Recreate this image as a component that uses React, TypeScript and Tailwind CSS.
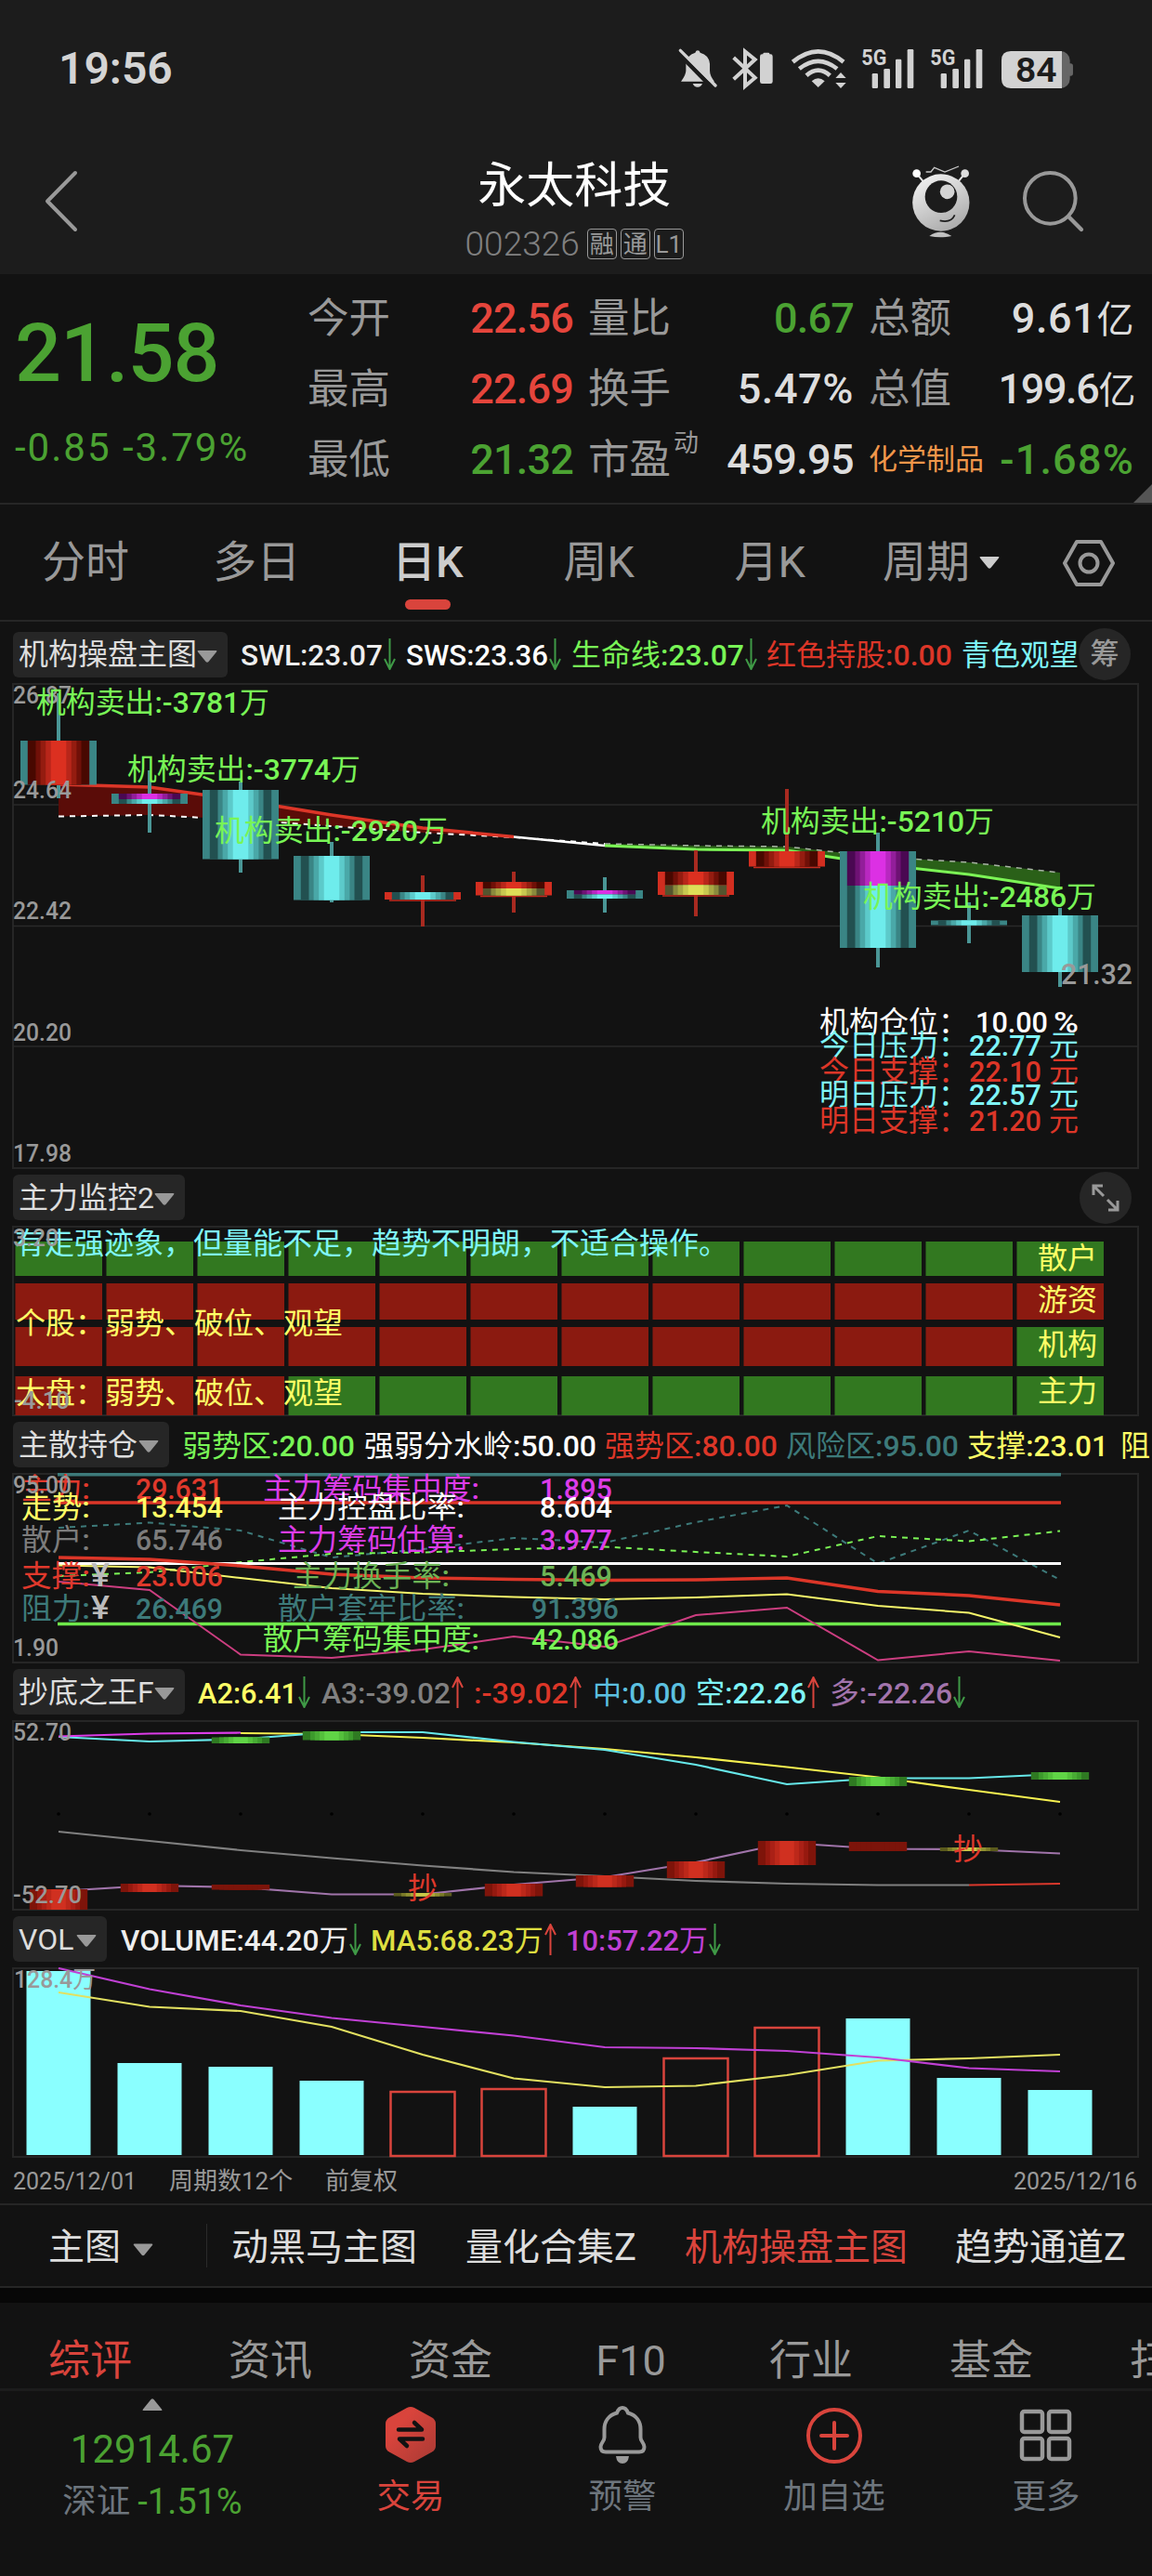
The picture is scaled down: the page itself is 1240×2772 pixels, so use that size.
import clsx from "clsx";

type Pt = number[];

const GRAY = "#999999";
const FONT = "font-['Roboto','Noto_Sans_CJK_SC',sans-serif]";

// x centre of every trading day column
const cx = (i: number) => 63 + 98 * i;
const line = (ys: Pt, from = 0) => ys.map((y, i) => `${cx(i + from)},${y}`).join(" ");

const CYAN = ["#225050", "#3a8585", "#4aa8a8", "#5ccaca", "#6eecec"];
const RED = ["#480800", "#701008", "#941c10", "#b8261a", "#dc3020"];
const MAGENTA = ["#4a0852", "#6e1274", "#921e9a", "#b828c0", "#dc30e4"];
const YELLOW = ["#54542e", "#8a8a3c", "#a8a844", "#c8c850", "#dede58"];
const SOFT_RED = ["#7e140a", "#96190f", "#aa2016", "#bc281a", "#d03020"];
const SOFT_GREEN = ["#2f7a22", "#3c9a2c", "#48ac34", "#54c03c", "#60d446"];
const SOFT_YELLOW = ["#5a5a1c", "#7a7a28", "#909030", "#a8a83c", "#c8c848"];
const DARK_RED = ["#7c140a", "#7c140a", "#7c140a", "#7c140a", "#7c140a"];

const HALF = [33.2, 24.5, 19.4, 13.8, 8.3];

type StripesProps = { x: number; y1: number; y2: number; colors: string[]; k?: number };

const Stripes = ({ x, y1, y2, colors, k = 1 }: StripesProps) => (
  <>
    {HALF.map((h, i) => (
      <rect key={i} x={x - h * k} y={y1} width={h * 2 * k} height={y2 - y1} fill={colors[i]} />
    ))}
  </>
);

// Chinese runs stay regular, latin letters and digits are medium
const Runs = ({ t }: { t: string }) => (
  <>
    {t
      .split(/([\u2e80-\uffef]+)/)
      .filter(Boolean)
      .map((run, i) => (
        <tspan key={i} fontWeight={/[\u2e80-\uffef]/.test(run) ? 400 : 500}>
          {run}
        </tspan>
      ))}
  </>
);

type LabelProps = {
  x: number;
  y: number;
  w?: number;
  size?: number;
  fill?: string;
  children: string;
};

const Label = ({ x, y, w, size = 32, fill = GRAY, children }: LabelProps) => (
  <text x={x} y={y} fontSize={size} fill={fill} textLength={w} lengthAdjust="spacingAndGlyphs">
    <Runs t={children} />
  </text>
);

const Chart = ({ y, h, children }: { y: number; h: number; children: React.ReactNode }) => (
  <svg width="1240" height={h} viewBox={`0 ${y} 1240 ${h}`} className="block shrink-0">
    <rect x="14" y={y + 1} width="1211" height={h - 2} fill="none" stroke="#262626" strokeWidth="2" />
    {children}
  </svg>
);

const Arrow = ({ up }: { up?: boolean }) => (
  <svg width="13" height="34" viewBox="0 0 13 34" className={clsx("shrink-0", up && "rotate-180")}>
    <path d="M6.5 0V33M1 22l5.500 11 5.500-11" fill="none" stroke={up ? "#d9443c" : "#3f9a46"} strokeWidth="2" />
  </svg>
);

const Caret = ({ className }: { className?: string }) => (
  <svg width="22" height="13" viewBox="0 0 22 13" className={clsx("shrink-0", className)}>
    <path d="M1.500 0h19q1.500 0 .5 1.500l-8.500 10.500q-1.500 1.500-3 0l-8.500-10.500q-1-1.500.5-1.500z" fill="currentColor" />
  </svg>
);

type Item = { t: string; w: number; c: string; a?: "up" | "down"; ml: number };

type PanelHeaderProps = {
  title: string;
  width: number;
  items?: Item[];
  tall?: boolean;
  children?: React.ReactNode;
};

// text squeezed to a set width, so that the indicator row keeps its columns
const Fit = ({ t, w, c, size = 32 }: { t: string; w: number; c: string; size?: number }) => (
  <svg width={w} height="40" className="shrink-0 overflow-visible">
    <text y="32" fontSize={size} fill={c} textLength={w} lengthAdjust="spacingAndGlyphs">
      <Runs t={t} />
    </text>
  </svg>
);

const PanelHeader = ({ title, width, items = [], tall, children }: PanelHeaderProps) => (
  <div className={clsx("flex shrink-0 items-center overflow-hidden pl-3.5", tall ? "h-[66px] pt-1" : "h-[61px]")}>
    <div
      className="flex h-[49px] shrink-0 items-center justify-between rounded-md bg-[#262626] pr-[11px] pl-[6px] text-[32px] text-[#dddddd]"
      style={{ width }}
    >
      <span className="whitespace-nowrap">{title}</span>
      <Caret className="mt-1 text-[#999999]" />
    </div>
    {items.map((it) => (
      <div key={it.t} className="flex shrink-0 items-center gap-px" style={{ marginLeft: it.ml }}>
        <Fit t={it.t} w={it.w} c={it.c} />
        {it.a && <Arrow up={it.a === "up"} />}
      </div>
    ))}
    {children}
  </div>
);

const StatusBar = () => (
  <div className="flex h-[148px] items-center justify-between pr-[81px] pl-[63px]">
    <span className="text-[48px] leading-none font-semibold text-[#d4d4d4]">19:56</span>
    <svg width="430" height="48.330" viewBox="60 30 1290 145" fill="#d2d2d2">
      <path d="M72 143Q88 122 88 108V86Q90 58 118 50Q120 43 126 43Q132 43 134 50Q163 58 165 86V108Q165 125 180 143Z" />
      <path d="M110 150h31q-4 11-15.500 11t-15.500-11z" />
      <path d="M62 50L174 164" stroke="#1c1c1c" strokeWidth="14" />
      <path d="M70 43L183 156" stroke="#d2d2d2" strokeWidth="10" strokeLinecap="round" />
      <path d="M242 66L311 131L279 158V46L311 72L242 136" fill="none" stroke="#d2d2d2" strokeWidth="12" />
      <rect x="327" y="55" width="41" height="95" rx="7" />
      <rect x="337" y="50" width="21" height="12" rx="4" />
      <g fill="none" stroke="#d2d2d2" strokeWidth="14">
        <path d="M433 80Q515 12 597 80" />
        <path d="M454 102Q515 53 576 102" />
        <path d="M477 124Q515 90 553 124" />
      </g>
      <path d="M494 142Q515 124 536 142L515 162Z" />
      <path d="M571 132l17-18 17 18zM571 147h34l-17 18z" />
      {[0, 222].map((dx) => (
        <g key={dx} transform={`translate(${dx} 0)`}>
          <text x="655" y="91" fontSize="74" fontWeight="700" textLength="81" lengthAdjust="spacingAndGlyphs">
            5G
          </text>
          <rect x="689" y="117" width="19" height="48" rx="4" />
          <rect x="727" y="102" width="20" height="63" rx="4" />
          <rect x="765" y="71" width="19" height="94" rx="4" />
          <rect x="803" y="39" width="20" height="126" rx="4" />
        </g>
      ))}
      <rect x="1200" y="45" width="128" height="120" rx="30" fill="#666" />
      <rect x="1318" y="85" width="20" height="40" rx="8" fill="#666" />
      <path d="M1302 45H1137Q1107 45 1107 75V135Q1107 165 1137 165H1302Z" />
      <text x="1152" y="143" fontSize="109" fontWeight="600" fill="#1c1c1c" textLength="134" lengthAdjust="spacingAndGlyphs">
        84
      </text>
    </svg>
  </div>
);

const TitleBar = () => (
  <div className="flex h-[147px] items-start justify-between pr-[67px] pl-[46px]">
    <svg width="217" height="70" viewBox="0 0 217 70" className="mt-[34px]">
      <path d="M35 4L5 34.500L35 65" fill="none" stroke="#999" strokeWidth="4" strokeLinecap="round" strokeLinejoin="round" />
    </svg>
    <div className="-ml-[3px] flex flex-col items-center">
      <h1 className="mt-[25px] text-[52px] leading-[56px] text-white">永太科技</h1>
      <div className="mt-[17px] flex items-center gap-1 text-[26px] leading-[30px] text-[#999999]">
        <span className="mr-1 text-[37px] font-light text-[#808080]">002326</span>
        {["融", "通", "L1"].map((t) => (
          <span key={t} className="flex h-[33px] w-8 items-center justify-center rounded border border-[#999999]">
            {t}
          </span>
        ))}
      </div>
    </div>
    <svg width="196.670" height="80" viewBox="800 410 590 240" className="mt-[29px]">
      <defs>
        <linearGradient id="ball" x1="0.200" y1="0" x2="0.700" y2="1">
          <stop offset="0" stopColor="#f2f2f2" />
          <stop offset="1" stopColor="#a9a9a9" />
        </linearGradient>
      </defs>
      <path d="M832 439L854 466M988 439L966 466" stroke="#e6e6e6" strokeWidth="6" />
      <circle cx="832" cy="439" r="13" fill="#fff" />
      <circle cx="988" cy="439" r="13" fill="#ddd" />
      <path d="M862 434H878L889 420L923 434L968 416" fill="none" stroke="#c8c8c8" strokeWidth="4" />
      <circle cx="910.500" cy="533" r="92" fill="url(#ball)" />
      <circle cx="911" cy="514" r="52" fill="#1c1c1c" />
      <circle cx="931" cy="498" r="23.500" fill="#d4d4d4" />
      <path d="M907 591Q943 600 955 573" fill="none" stroke="#1c1c1c" strokeWidth="5" />
      <path d="M873 641Q909 616 945 641Q909 649 873 641Z" fill="#c0c0c0" />
      <circle cx="1263" cy="519" r="82" fill="none" stroke="#999" strokeWidth="12" />
      <path d="M1323 579L1364 620" stroke="#999" strokeWidth="13" strokeLinecap="round" />
    </svg>
  </div>
);

type Quote = { label: string; value: string; color: string; sup?: string; small?: boolean };

const columns: Quote[][] = [
  [
    { label: "今开", value: "22.56", color: "text-[#e5453c] tracking-[-0.800px]" },
    { label: "最高", value: "22.69", color: "text-[#e5453c] tracking-[-0.800px]" },
    { label: "最低", value: "21.32", color: "text-[#4ba232] tracking-[-0.800px]" },
  ],
  [
    { label: "量比", value: "0.67", color: "text-[#4ba232] tracking-[-0.800px]" },
    { label: "换手", value: "5.47%", color: "text-[#dddddd] tracking-[0.600px]" },
    { label: "市盈", value: "459.95", color: "text-[#dddddd] tracking-[-0.600px]", sup: "动" },
  ],
  [
    { label: "总额", value: "9.61亿", color: "text-[#dddddd] tracking-[0.600px]" },
    { label: "总值", value: "199.6亿", color: "text-[#dddddd] tracking-[-1.400px]" },
    { label: "化学制品", value: "-1.68%", color: "text-[#4ba232] tracking-[1.200px]", small: true },
  ],
];

const QuotePanel = () => (
  <section className="relative flex h-[248px] border-b-2 border-[#262626] pr-[18px] pl-4">
    <div className="flex w-[315px] flex-col text-[#4ba232]">
      <span className="mt-[40px] text-[88px] leading-[90px] font-medium tracking-[-1px]">21.58</span>
      <span className="mt-[32px] text-[42px] leading-[50px] tracking-[2px] whitespace-nowrap">-0.85 -3.79%</span>
    </div>
    <div className="flex flex-1 gap-4">
      {columns.map((col, i) => (
        <div key={i} className="flex w-[286px] flex-col pt-[10px]">
          {col.map((q) => (
            <div key={q.label} className="flex h-[76px] items-center justify-between whitespace-nowrap">
              <span className={clsx("relative", q.small ? "text-[31px] text-[#f0964a]" : "text-[44.500px] text-[#999999]")}>
                {q.label}
                {q.sup && <sup className="absolute top-0.5 left-full ml-[3px] text-[27px] leading-none">{q.sup}</sup>}
              </span>
              <span className={clsx("text-[45px] font-medium", q.color)}>
                {q.value.replace("亿", "")}
                {q.value.endsWith("亿") && <span className="text-[40px] font-normal">亿</span>}
              </span>
            </div>
          ))}
        </div>
      ))}
    </div>
    <span className="absolute right-0 bottom-0 h-5 w-5 bg-[#555555] [clip-path:polygon(100%_0,100%_100%,0_100%)]" />
  </section>
);

const PeriodTabs = () => (
  <nav className="flex h-[126px] items-center border-b-2 border-[#262626] pt-px text-[47px] text-[#999999]">
    {["分时", "多日", "日K", "周K", "月K"].map((t) => (
      <span
        key={t}
        className={clsx(
          "relative flex h-full w-[184.200px] items-center justify-center",
          t === "日K" && "font-medium text-[#cccccc]"
        )}
      >
        {t}
        {t === "日K" && <i className="absolute bottom-[11px] h-[11px] w-[49px] rounded-full bg-[#d9443c]" />}
      </span>
    ))}
    <span className="ml-[29px]">周期</span>
    <Caret className="ml-[8px] w-[26px] text-[#cccccc]" />
    <svg width="56" height="52" viewBox="0 0 56 52" className="ml-[66px]" fill="none" stroke="#999" strokeWidth="4">
      <path d="M15 3H41L54 26L41 49H15L2 26Z" strokeLinejoin="round" />
      <circle cx="28" cy="26" r="9.500" />
    </svg>
  </nav>
);

type Part = { y1: number; y2: number; c: string[] };
type Candle = { wick: [number, number]; parts: Part[]; up?: boolean };

const candles: Candle[] = [
  { wick: [746, 859], parts: [{ y1: 797, y2: 844.5, c: RED }] },
  { wick: [829, 896], parts: [{ y1: 854, y2: 860, c: MAGENTA }, { y1: 860, y2: 865, c: CYAN }] },
  { wick: [841, 939], parts: [{ y1: 850, y2: 924.5, c: CYAN }] },
  { wick: [906, 971], parts: [{ y1: 921, y2: 968.5, c: CYAN }] },
  { wick: [942, 997], parts: [{ y1: 960, y2: 968, c: CYAN }], up: true },
  { wick: [938, 982], parts: [{ y1: 949, y2: 956, c: RED }, { y1: 956, y2: 963.5, c: YELLOW }], up: true },
  { wick: [944, 982], parts: [{ y1: 958, y2: 962.7, c: MAGENTA }, { y1: 962.7, y2: 967, c: CYAN }] },
  { wick: [915, 986], parts: [{ y1: 938, y2: 952.5, c: RED }, { y1: 952.5, y2: 963, c: YELLOW }], up: true },
  { wick: [849, 930], parts: [{ y1: 916, y2: 932.5, c: RED }], up: true },
  { wick: [896, 1041], parts: [{ y1: 916, y2: 953, c: MAGENTA }, { y1: 953, y2: 1020, c: CYAN }] },
  { wick: [971, 1015], parts: [{ y1: 990.5, y2: 995.5, c: CYAN }] },
  { wick: [977, 1062], parts: [{ y1: 985, y2: 1046, c: CYAN }] },
];

const sells = [
  { x: 39, y: 767, t: "机构卖出:-3781万" },
  { x: 137, y: 839, t: "机构卖出:-3774万" },
  { x: 231, y: 905, t: "机构卖出:-2920万" },
  { x: 819, y: 895, t: "机构卖出:-5210万" },
  { x: 929, y: 976, t: "机构卖出:-2486万" },
];

const levels = [
  { y: 1111, t: "机构仓位：", v: "10.00", u: "%", c: "#ffffff" },
  { y: 1136, t: "今日压力：", v: "22.77", u: "元", c: "#7ff5f8" },
  { y: 1164, t: "今日支撑：", v: "22.10", u: "元", c: "#dc3628" },
  { y: 1189, t: "明日压力：", v: "22.57", u: "元", c: "#7ff5f8" },
  { y: 1217, t: "明日支撑：", v: "21.20", u: "元", c: "#dc3628" },
];

const trend = [844, 847, 861, 877, 891, 900.5, 910, 914, 915, 930, 941, 956];
const base = [878.5, 877, 882, 889, 896, 901, 908, 910, 911, 922, 928, 939];

const area = (from: number, to: number) =>
  `${line(trend.slice(from, to), from)} ${line(base.slice(from, to), from).split(" ").reverse().join(" ")}`;

const MainChart = () => (
  <Chart y={735} h={523}>
    {[866, 996.5, 1126].map((y) => (
      <path key={y} d={`M14 ${y}H1225`} stroke="#2a2a2a" strokeWidth="1.500" />
    ))}
    <polygon points={area(0, 6)} fill="#5a0c08" />
    <polygon points={area(6, 12)} fill="#2a6018" />
    <polyline points={line(base.slice(0, 7))} fill="none" stroke="#fff" strokeWidth="2" strokeDasharray="6 6" />
    <polyline points={line(base.slice(6), 6)} fill="none" stroke="#a8b4a4" strokeWidth="1.500" strokeDasharray="6 6" />
    <polyline points={line(trend.slice(0, 6))} fill="none" stroke="#dc3628" strokeWidth="3.500" />
    <polyline points={line(trend.slice(5, 7), 5)} fill="none" stroke="#fff" strokeWidth="2.500" />
    <polyline points={line(trend.slice(6), 6)} fill="none" stroke="#7cf556" strokeWidth="3" />
    {candles.map((c, i) => {
      const x = cx(i);
      const top = c.parts[0].y1;
      const bottom = c.parts[c.parts.length - 1].y2;
      return (
        <g key={i}>
          <rect x={x - 2} y={c.wick[0]} width="4" height={c.wick[1] - c.wick[0]} fill={c.up ? "#a82a20" : "#4a9696"} />
          <rect x={x - 41} y={top} width="82" height={bottom - top} fill={c.up ? "#d22e20" : "#3a8585"} />
          {c.up && <path d={`M${x - 36} ${bottom + 1}h72`} stroke="#c02c20" strokeWidth="1.500" />}
          {c.parts.map((p) => (
            <Stripes key={p.y1} x={x} y1={p.y1} y2={p.y2} colors={p.c} />
          ))}
        </g>
      );
    })}
    {[["26.87", 757], ["24.64", 859], ["22.42", 989], ["20.20", 1120], ["17.98", 1250]].map(([t, y]) => (
      <Label key={t} x={14} y={Number(y)} w={63} size={26}>
        {String(t)}
      </Label>
    ))}
    {sells.map((s) => (
      <Label key={s.t} x={s.x} y={s.y} w={251} fill="#78f556">
        {s.t}
      </Label>
    ))}
    <Label x={1142} y={1058.5} w={77}>
      21.32
    </Label>
    {levels.map((l) => (
      <g key={l.t}>
        <Label x={882} y={l.y} w={160} fill={l.c}>
          {l.t}
        </Label>
        <Label x={l.u === "%" ? 1050 : 1043} y={l.y} w={78} fill={l.c}>
          {l.v}
        </Label>
        <Label x={l.u === "%" ? 1134 : 1129} y={l.y} w={l.u === "%" ? 27 : 32} fill={l.c}>
          {l.u}
        </Label>
      </g>
    ))}
  </Chart>
);

const R = "#8b1a10";
const G = "#327820";
const monitorRows = [
  { y: 1336, h: 37, t: "散户", ty: 1365, cell: () => G },
  { y: 1381, h: 39, t: "游资", ty: 1410, cell: () => R },
  { y: 1428, h: 42, t: "机构", ty: 1458, cell: (i: number) => (i === 11 ? G : R) },
  { y: 1481, h: 42, t: "主力", ty: 1508, cell: (i: number) => (i < 3 ? R : G) },
];

const MonitorChart = () => (
  <Chart y={1319} h={205}>
    {monitorRows.map((r) => (
      <g key={r.t}>
        {Array.from({ length: 12 }, (_, i) => (
          <rect key={i} x={cx(i) - 46.5} y={r.y} width="93.500" height={r.h} fill={r.cell(i)} />
        ))}
        <Label x={1117} y={r.ty} w={64} fill="#ffff66">
          {r.t}
        </Label>
      </g>
    ))}
    <Label x={16} y={1349} w={768} fill="#7ff5f8">
      有走强迹象，但量能不足，趋势不明朗，不适合操作。
    </Label>
    <Label x={17} y={1435} w={352} fill="#ffff66">
      个股：弱势、破位、观望
    </Label>
    <Label x={17} y={1510} w={352} fill="#ffff66">
      大盘：弱势、破位、观望
    </Label>
    <Label x={14} y={1341} w={49} size={26}>
      3.20
    </Label>
    <Label x={15} y={1516} w={60} size={26}>
      -4.10
    </Label>
  </Chart>
);

const holders = [
  { y: 1613, l: "主力:", v: "29.631", c: "#e0392c", mx: 283, m: "主力筹码集中度:", mv: "1.895", mc: "#dc3ce8" },
  { y: 1633, l: "走势:", v: "13.454", c: "#ffff66", mx: 299, m: "主力控盘比率:", mv: "8.604", mc: "#ffffff" },
  { y: 1668, l: "散户:", v: "65.746", c: "#7c7c7c", mx: 299, m: "主力筹码估算:", mv: "3.977", mc: "#dc3ce8" },
  { y: 1707, l: "支撑:", v: "23.006", c: "#e0392c", mx: 315, m: "主力换手率:", mv: "5.469", mc: "#6cb455" },
  { y: 1742, l: "阻力:", v: "26.469", c: "#3d7a7a", mx: 299, m: "散户套牢比率:", mv: "91.396", mc: "#3d7a7a" },
];

const HoldingChart = () => (
  <Chart y={1585} h={205}>
    <g fill="none">
      <polyline points={line([1644, 1638.5, 1647, 1676, 1667, 1655, 1660, 1638, 1620, 1682.5, 1647, 1700])} stroke="#3d7a7a" strokeWidth="2" strokeDasharray="6 6" />
      <polyline points={line([1696, 1692, 1681, 1672, 1670.5, 1667, 1664.5, 1670, 1675, 1653, 1658.5, 1647.5])} stroke="#7cf556" strokeWidth="2" strokeDasharray="6 6" />
      <path d="M62 1586.500H1142" stroke="#3d7a7a" strokeWidth="4" />
      <path d="M62 1617H1142" stroke="#dc3628" strokeWidth="3.500" />
      <path d="M62 1682.500H1142" stroke="#fff" strokeWidth="3" />
      <path d="M62 1747.500H1142" stroke="#6ee84a" strokeWidth="3.500" />
      <polyline points={line([1676, 1678, 1685, 1694, 1698, 1699.5, 1700.5, 1700, 1698, 1712.5, 1717, 1727])} stroke="#dc3628" strokeWidth="3.500" />
      <polyline points={line([1684.5, 1686.5, 1698, 1709, 1715, 1718.5, 1721, 1719, 1715.5, 1728, 1735.5, 1762])} stroke="#f5f56a" strokeWidth="2" />
      <polyline points={line([1702, 1711, 1780.5, 1784, 1775, 1761, 1772, 1738, 1730, 1786.5, 1777, 1787])} stroke="#cc3e80" strokeWidth="2" />
    </g>
    {holders.map((h) => (
      <g key={h.m}>
        <Label x={23} y={h.y} w={74} fill={h.c}>
          {h.l}
        </Label>
        <Label x={146} y={h.y} w={94} fill={h.c}>
          {h.v}
        </Label>
        <Label x={h.mx} y={h.y} w={(h.m.length - 1) * 32 + 9} fill={h.mc}>
          {h.m}
        </Label>
        <Label x={h.mv.length > 5 ? 572 : 581} y={h.y} w={h.mv.length > 5 ? 94 : 78} fill={h.mc}>
          {h.mv}
        </Label>
      </g>
    ))}
    <Label x={283} y={1775} w={233} fill="#78f556">
      散户筹码集中度:
    </Label>
    <Label x={572} y={1775} w={94} fill="#78f556">
      42.086
    </Label>
    <Label x={98} y={1707} w={20} size={35} fill="#bbbbbb">
      ¥
    </Label>
    <Label x={98} y={1742} w={20} size={35} fill="#bbbbbb">
      ¥
    </Label>
    <Label x={14} y={1607} w={63} size={26}>
      95.00
    </Label>
    <Label x={14} y={1782} w={49} size={26}>
      1.90
    </Label>
  </Chart>
);

const blocks: [number, number, number, string[]][] = [
  [0, 2033, 2055, SOFT_RED],
  [1, 2027, 2036, SOFT_RED],
  [2, 2028, 2033.5, DARK_RED],
  [5, 2027, 2040.5, SOFT_RED],
  [6, 2018, 2030.5, SOFT_RED],
  [7, 2003, 2021, SOFT_RED],
  [8, 1981, 2007, SOFT_RED],
  [9, 1982, 1992, DARK_RED],
  [4, 2037, 2040.5, SOFT_YELLOW],
  [10, 1988, 1992, SOFT_YELLOW],
  [2, 1869.5, 1876, SOFT_GREEN],
  [3, 1863, 1872.5, SOFT_GREEN],
  [9, 1912, 1922, SOFT_GREEN],
  [11, 1907, 1915, SOFT_GREEN],
];

const BottomChart = () => (
  <Chart y={1851} h={205}>
    {Array.from({ length: 12 }, (_, i) => (
      <circle key={i} cx={cx(i)} cy="1952" r="1.800" fill="#000" />
    ))}
    <g fill="none" strokeWidth="2.200">
      <polyline points={line([1971, 1981, 1991, 1999.5, 2007.5, 2014.5, 2019, 2024, 2027, 2028.5, 2028.5])} stroke="#808080" />
      <polyline points={line([2028.5, 2027], 10)} stroke="#d9382c" />
      <polyline points={line([2035, 2029, 2031, 2038.5, 2038.5, 2028, 2020, 2004, 1983, 1989.5, 1990, 1994.5])} stroke="#a074aa" />
      <polyline points={line([1865, 1866, 1870, 1875, 1882, 1891, 1901.5, 1912.5, 1926, 1939], 2)} stroke="#f5f050" />
      <polyline points={line([1869, 1874, 1871.5, 1864, 1864, 1874.5, 1883, 1899, 1920, 1913.5, 1913.5, 1909])} stroke="#66e8ea" />
      <polyline points={line([1868.5, 1865.5, 1864.5])} stroke="#dc3ce8" />
    </g>
    {blocks.map(([i, y1, y2, c]) => (
      <Stripes key={`${i}-${y1}`} x={cx(i)} y1={y1} y2={y2} colors={c} k={0.94} />
    ))}
    <Label x={439} y={2043} w={32} fill="#e0392c">
      抄
    </Label>
    <Label x={1026} y={2001} w={32} fill="#e0392c">
      抄
    </Label>
    <Label x={14} y={1873} w={63} size={26}>
      52.70
    </Label>
    <Label x={14} y={2048} w={74} size={26}>
      -52.70
    </Label>
  </Chart>
);

const volumes = [2121, 2220, 2224, 2239, 2251, 2248, 2267, 2215, 2182, 2172, 2236, 2249];
const rising = [4, 5, 7, 8];

const VolumeChart = () => (
  <Chart y={2117} h={205}>
    {volumes.map((y, i) =>
      rising.includes(i) ? (
        <rect key={i} x={cx(i) - 34.5} y={y} width="69" height={2320 - y} fill="none" stroke="#d9443c" strokeWidth="2.500" />
      ) : (
        <rect key={i} x={cx(i) - 34.5} y={y} width="69" height={2319 - y} fill="#8affff" />
      )
    )}
    <polyline points={line([2144, 2159.5, 2164, 2181, 2211, 2236.5, 2246, 2244.5, 2233, 2217.5, 2215, 2211])} fill="none" stroke="#e2e060" strokeWidth="2.200" />
    <polyline points={line([2118, 2140.5, 2158, 2171.5, 2181, 2190.5, 2203, 2204, 2207, 2214, 2225.5, 2229])} fill="none" stroke="#c040d4" strokeWidth="2.200" />
    <Label x={15} y={2139} w={88} size={26}>
      128.4万
    </Label>
  </Chart>
);

const mainItems: Item[] = [
  { t: "SWL:23.07", w: 153, c: "#eeeeee", a: "down", ml: 14 },
  { t: "SWS:23.36", w: 153, c: "#ffffff", a: "down", ml: 11 },
  { t: "生命线:23.07", w: 186, c: "#78f556", a: "down", ml: 11 },
  { t: "红色持股:0.00", w: 200, c: "#dc3628", ml: 10 },
  { t: "青色观望", w: 126, c: "#7ff5f8", ml: 10 },
];

const holdingItems: Item[] = [
  { t: "弱势区:20.00", w: 186, c: "#78f556", ml: 14 },
  { t: "强弱分水岭:50.00", w: 250, c: "#ffffff", ml: 10 },
  { t: "强势区:80.00", w: 186, c: "#dc3628", ml: 9 },
  { t: "风险区:95.00", w: 186, c: "#3d7a7a", ml: 9 },
  { t: "支撑:23.01", w: 152, c: "#ffff66", ml: 9 },
  { t: "阻", w: 32, c: "#ffff66", ml: 13 },
];

const bottomItems: Item[] = [
  { t: "A2:6.41", w: 107, c: "#ffff66", a: "down", ml: 14 },
  { t: "A3:-39.02", w: 139, c: "#808080", a: "up", ml: 12 },
  { t: ":-39.02", w: 102, c: "#dc3628", a: "up", ml: 11 },
  { t: "中:0.00", w: 101, c: "#5cc0e0", ml: 12 },
  { t: "空:22.26", w: 119, c: "#7ff5f8", a: "up", ml: 10 },
  { t: "多:-22.26", w: 132, c: "#a274ac", a: "down", ml: 11 },
];

const volumeItems: Item[] = [
  { t: "VOLUME:44.20万", w: 245, c: "#eeeeee", a: "down", ml: 15 },
  { t: "MA5:68.23万", w: 186, c: "#dede40", a: "up", ml: 10 },
  { t: "10:57.22万", w: 153, c: "#c040d4", a: "down", ml: 10 },
];

const ToolRow = () => (
  <div className="flex h-[91px] shrink-0 items-center overflow-hidden border-y-2 border-[#262626] pt-1 pl-[52px] text-[40px] whitespace-nowrap text-[#dddddd]">
    <span className="w-[78px] text-[39px]">主图</span>
    <Caret className="mt-1 ml-[13px] h-[14px] text-[#999999]" />
    <span className="mr-[26px] mb-1 ml-[57px] h-[47px] w-px bg-[#2a2a2a]" />
    <span className="w-[252px]">动黑马主图</span>
    <span className="w-[236px]">量化合集Z</span>
    <span className="w-[291px] text-[#d9443c]">机构操盘主图</span>
    <span>趋势通道Z</span>
  </div>
);

const InfoTabs = () => (
  <nav className="flex h-[95px] shrink-0 overflow-hidden border-b-[3px] border-[#1c1c1c] pt-[30px] text-[45px] leading-[66px] text-[#999999]">
    {["综评", "资讯", "资金", "F10", "行业", "基金", "扫雷"].map((t) => (
      <span key={t} className={clsx("w-[194px] shrink-0 text-center", t === "综评" && "text-[#d9443c]")}>
        {t}
      </span>
    ))}
  </nav>
);

const actions = [
  {
    label: "交易",
    color: "text-[#d9443c]",
    icon: (
      <>
        <defs>
          <linearGradient id="hex" x1="0" y1="0" x2="1" y2="1">
            <stop offset="0.300" stopColor="#d9443c" />
            <stop offset="1" stopColor="#a83a34" />
          </linearGradient>
        </defs>
        <path d="M28 2Q32 0 36 2L55 12.500Q59 15 59 19V43Q59 47 55 49.500L36 60Q32 62 28 60L9 49.500Q5 47 5 43V19Q5 15 9 12.500Z" fill="url(#hex)" />
        <path d="M19 25.500H44L36 18M45 35.500H20L28 43" fill="none" stroke="#121212" strokeWidth="4.500" strokeLinecap="round" strokeLinejoin="round" />
      </>
    ),
  },
  {
    label: "预警",
    color: "text-[#6d757d]",
    icon: (
      <>
        <path d="M32 2C28 2 27 5 26 7.500C17 10 12.500 17 12.500 25V34C12.500 38 8.500 40 8.500 44C8.500 48 11 49.500 14 49.500H50C53 49.500 55.500 48 55.500 44C55.500 40 51.500 38 51.500 34V25C51.500 17 47 10 38 7.500C37 5 36 2 32 2Z" fill="none" stroke="#999" strokeWidth="4" />
        <path d="M25 54H39Q38 62 32 62Q26 62 25 54Z" fill="#999" />
      </>
    ),
  },
  {
    label: "加自选",
    color: "text-[#6d757d]",
    icon: (
      <g fill="none" stroke="#d9443c" strokeWidth="4">
        <circle cx="32" cy="32" r="28" />
        <path d="M32 18V46M18 32H46" strokeLinecap="round" />
      </g>
    ),
  },
  {
    label: "更多",
    color: "text-[#6d757d]",
    icon: (
      <g fill="none" stroke="#999" strokeWidth="4.500">
        <rect x="6" y="6" width="22" height="22" rx="2.500" />
        <rect x="35" y="6" width="22" height="22" rx="2.500" />
        <rect x="6" y="35" width="22" height="22" rx="2.500" />
        <rect x="35" y="35" width="22" height="22" rx="2.500" />
      </g>
    ),
  },
];

const BottomBar = () => (
  <footer className="flex h-[199px] text-[36.500px]">
    <div className="flex w-[328px] flex-col items-center pt-2">
      <Caret className="rotate-180 text-[#999999]" />
      <span className="mt-[17px] text-[42px] leading-[50px] text-[#4ba232]">12914.67</span>
      <span className="mt-[6px] flex items-center gap-2 leading-[50px] text-[#6d757d]">
        深证<span className="text-[38px] text-[#4ba232]">-1.51%</span>
      </span>
    </div>
    {actions.map((a) => (
      <div key={a.label} className="flex flex-1 flex-col items-center pt-4">
        <svg width="64" height="64" viewBox="0 0 64 64">
          {a.icon}
        </svg>
        <span className={clsx("mt-[9px] leading-[50px]", a.color)}>{a.label}</span>
      </div>
    ))}
  </footer>
);

const App = () => {
  return (
    <div className={clsx("flex h-[2772px] w-[1240px] flex-col overflow-hidden bg-[#121212]", FONT)}>
      <header className="h-[295px] shrink-0 bg-[#1c1c1c]">
        <StatusBar />
        <TitleBar />
      </header>
      <QuotePanel />
      <PeriodTabs />

      <PanelHeader title="机构操盘主图" width={231} items={mainItems} tall>
        <span className="flex h-14 w-14 shrink-0 items-center justify-center rounded-full bg-[#262626] text-[31px] font-medium text-[#999999]">
          筹
        </span>
      </PanelHeader>
      <MainChart />

      <PanelHeader title="主力监控2" width={185}>
        <span className="mr-[22px] ml-auto flex h-14 w-14 items-center justify-center rounded-full bg-[#262626]">
          <svg width="30" height="30" viewBox="0 0 30 30" fill="none" stroke={GRAY} strokeWidth="3">
            <path d="M2 12V2H12M2 2L13 13M28 18V28H18M28 28L17 17" />
          </svg>
        </span>
      </PanelHeader>
      <MonitorChart />

      <PanelHeader title="主散持仓" width={168} items={holdingItems} />
      <HoldingChart />

      <PanelHeader title="抄底之王F" width={185} items={bottomItems} />
      <BottomChart />

      <PanelHeader title="VOL" width={101} items={volumeItems} />
      <VolumeChart />

      <div className="flex h-[49px] shrink-0 items-center pt-0.5 pr-4 pl-3.5 text-[26px]" style={{ color: GRAY }}>
        <span className="w-[168px] text-[25px]">2025/12/01</span>
        <span className="w-[168px]">周期数12个</span>
        <span>前复权</span>
        <span className="ml-auto text-[25px]">2025/12/16</span>
      </div>

      <ToolRow />
      <div className="h-4 shrink-0 bg-[#070707]" />
      <InfoTabs />
      <BottomBar />
    </div>
  );
};

export default App;
